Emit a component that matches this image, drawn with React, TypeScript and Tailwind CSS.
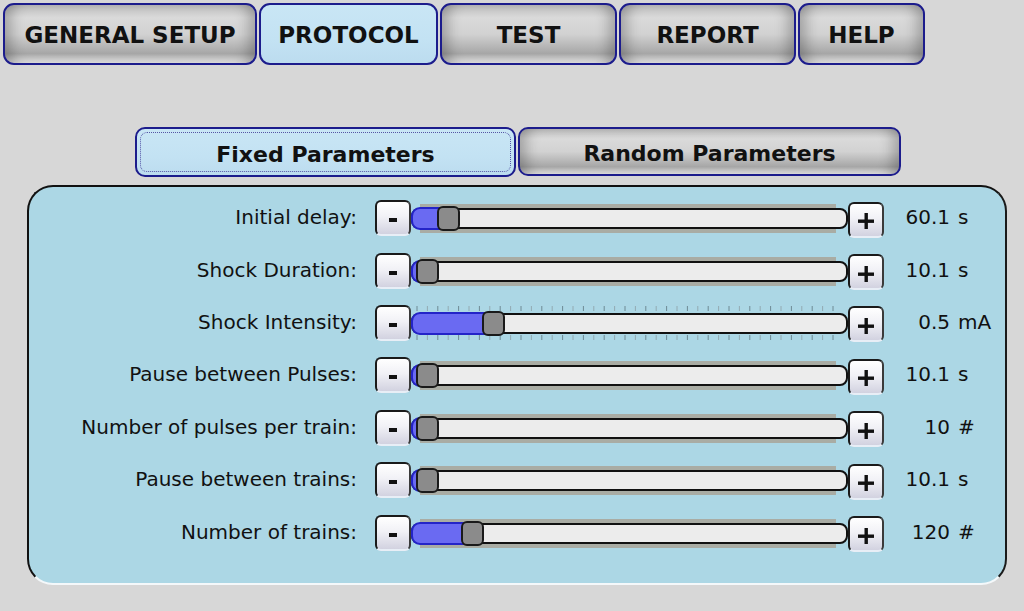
import React from 'react';

const metal =
  'bg-[linear-gradient(to_bottom,#bcbcbc_0%,#dadada_22%,#d2d2d2_50%,#a6a6a6_84%,#e6e6e6_100%)] shadow-[inset_14px_0_14px_-8px_rgba(0,0,0,0.26),inset_-14px_0_14px_-8px_rgba(0,0,0,0.26)]';
const active = 'bg-[linear-gradient(to_bottom,#c9e6f5_0%,#c3e2f3_60%,#bcdcef_100%)]';

const tabs = [
  { label: 'GENERAL SETUP', w: 'w-[254px]' },
  { label: 'PROTOCOL', w: 'w-[179px]', on: true },
  { label: 'TEST', w: 'w-[177px]' },
  { label: 'REPORT', w: 'w-[177px]' },
  { label: 'HELP', w: 'w-[127px]' },
];

interface Row {
  label: string;
  num: string;
  unit: string;
  pos: number; // thumb left offset in px inside track
  ticks?: boolean;
}

const rows: Row[] = [
  { label: 'Initial delay:', num: '60.1', unit: 's', pos: 26 },
  { label: 'Shock Duration:', num: '10.1', unit: 's', pos: 5 },
  { label: 'Shock Intensity:', num: '0.5', unit: 'mA', pos: 71, ticks: true },
  { label: 'Pause between Pulses:', num: '10.1', unit: 's', pos: 5 },
  { label: 'Number of pulses per train:', num: '10', unit: '#', pos: 5 },
  { label: 'Pause between trains:', num: '10.1', unit: 's', pos: 5 },
  { label: 'Number of trains:', num: '120', unit: '#', pos: 50 },
];

function StepButton({ sign }: { sign: '-' | '+' }) {
  return (
    <button
      className={`w-[36px] h-[36px] shrink-0 rounded-[6px] border-2 border-t-[#1a1a1a] border-l-[#1a1a1a] border-r-[#3a3a3a] border-b-[#e8eef6] bg-[linear-gradient(to_bottom,#ffffff_0%,#f1f1f6_45%,#d2d2e0_100%)] flex items-center justify-center ${
        sign === '+' ? 'mt-[3px]' : ''
      }`}
    >
      {sign === '-' ? (
        <span className="block w-[8px] h-[4px] bg-[#111] mt-[4px]" />
      ) : (
        <svg width="18" height="18" viewBox="0 0 18 18" className="mt-[3px]">
          <rect x="7.5" y="1" width="3.4" height="16" fill="#111" />
          <rect x="1" y="7.5" width="16" height="3.4" fill="#111" />
        </svg>
      )}
    </button>
  );
}

function Ticks() {
  const xs = Array.from({ length: 41 }, (_, i) => 6 + i * 10.4);
  return (
    <svg className="absolute left-0 top-0" width="437" height="40" viewBox="0 0 437 40">
      {xs.map((x, i) => (
        <g key={i} stroke={i % 2 === 0 ? '#6f8a94' : '#93aab2'} strokeWidth="1">
          <line x1={x} y1="3" x2={x} y2="8" />
          <line x1={x} y1="32" x2={x} y2="37" />
        </g>
      ))}
    </svg>
  );
}

function Slider({ pos, ticks }: { pos: number; ticks?: boolean }) {
  return (
    <div className="relative w-[437px] h-[40px] shrink-0">
      {ticks ? (
        <Ticks />
      ) : (
        <div className="absolute left-[9px] right-[12px] top-[6px] h-[29px] bg-[#a9aca4]" />
      )}
      <div className="absolute left-0 right-0 top-[10px] h-[21px] rounded-[8px] border-2 border-[#111] bg-[#ececec]" />
      <div
        className="absolute left-0 top-[9px] h-[23px] rounded-l-[9px] border-2 border-r-0 border-[#2424c8] bg-[#6a6af2]"
        style={{ width: pos + 6 }}
      />
      <div
        className="absolute top-[8px] w-[23px] h-[25px] rounded-[6px] border-2 border-[#1a1a1a] bg-[#8b8b8b]"
        style={{ left: pos }}
      />
    </div>
  );
}

export default function App() {
  return (
    <div
      className="w-[1024px] h-[611px] bg-[#d7d7d7] overflow-hidden pt-[3px] pl-[3px]"
      style={{ fontFamily: '"DejaVu Sans", Verdana, sans-serif' }}
    >
      <div className="flex gap-[2px]">
        {tabs.map((t) => (
          <div
            key={t.label}
            className={`${t.w} h-[62px] pt-[3px] rounded-[11px] border-2 border-[#1c1c8c] flex items-center justify-center text-[23px] font-bold text-[#111] ${
              t.on ? active : metal
            }`}
          >
            {t.label}
          </div>
        ))}
      </div>

      <div className="flex gap-[2px] mt-[62px] ml-[132px]">
        <div
          className={`relative w-[381px] h-[50px] pt-[4px] rounded-[10px] border-2 border-[#1c1c8c] flex items-center justify-center text-[22px] font-bold text-[#111] ${active}`}
        >
          <div className="absolute inset-[3px] rounded-[7px] border border-dotted border-[#5656a6]" />
          <span className="relative">Fixed Parameters</span>
        </div>
        <div
          className={`w-[383px] h-[49px] pt-[4px] rounded-[10px] border-2 border-[#1c1c8c] flex items-center justify-center text-[22px] font-bold text-[#111] ${metal}`}
        >
          Random Parameters
        </div>
      </div>

      <div className="mt-[8px] ml-[24px] w-[980px] h-[400px] rounded-[26px] border-2 border-t-[#111] border-l-[#111] border-r-[#1a1a1a] border-b-[#f4f8fa] bg-[#acd7e5] pt-[5px]">
        {rows.map((r) => (
          <div key={r.label} className="flex items-center h-[52.4px]">
            <div className="w-[328px] text-right text-[20px] text-[#111] shrink-0 -mt-[2px]">{r.label}</div>
            <div className="w-[18px] shrink-0" />
            <StepButton sign="-" />
            <Slider pos={r.pos} ticks={r.ticks} />
            <StepButton sign="+" />
            <div className="flex items-baseline text-[20px] text-[#111] ml-[6px] -mt-[2px]">
              <span className="w-[60px] text-right">{r.num}</span>
              <span className="ml-[8px]">{r.unit}</span>
            </div>
          </div>
        ))}
      </div>
    </div>
  );
}
